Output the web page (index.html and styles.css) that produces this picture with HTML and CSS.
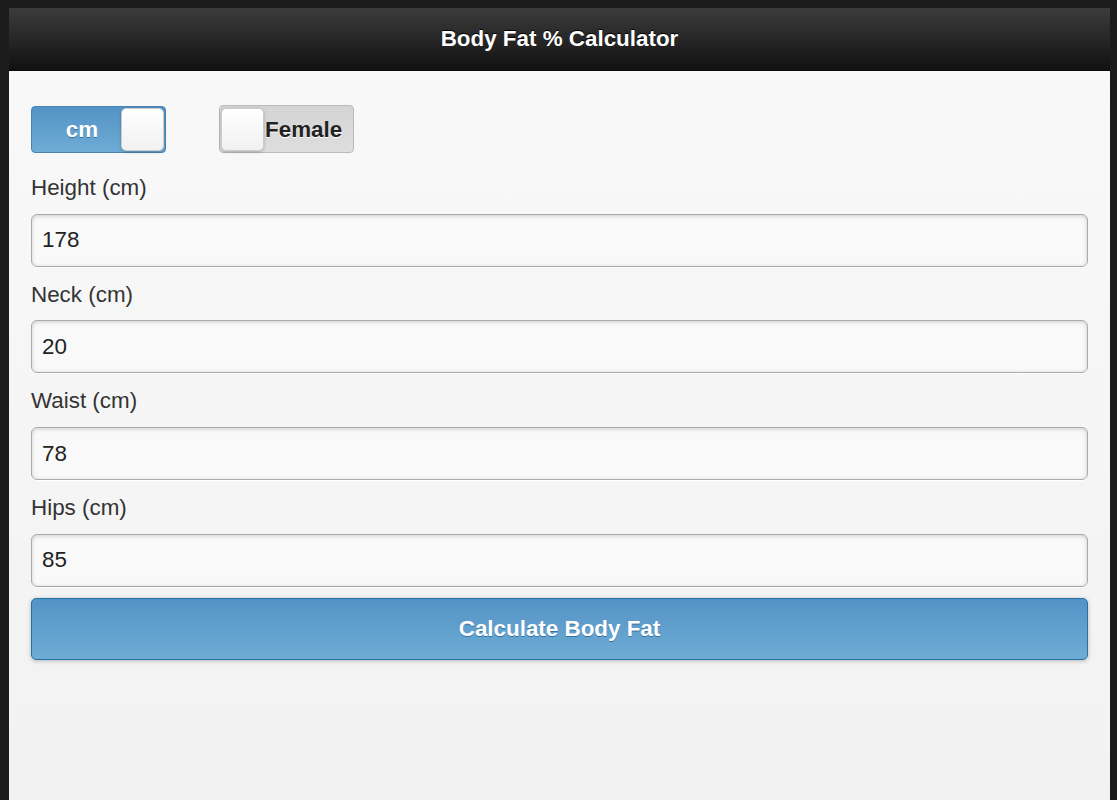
FILE: index.html
```html
<!DOCTYPE html>
<html lang="en">
<head>
<meta charset="utf-8">
<title>Body Fat % Calculator</title>
<link rel="stylesheet" href="styles.css">
</head>
<body>
<div class="frame">
  <div class="page">
    <header class="header"><h1 class="title">Body Fat % Calculator</h1></header>
    <main class="content">
      <div class="toggles">
        <div class="flip flip-on">
          <span class="flip-label">cm</span>
          <span class="flip-handle"></span>
        </div>
        <div class="flip flip-off">
          <span class="flip-handle"></span>
          <span class="flip-label">Female</span>
        </div>
      </div>
      <div class="field">
        <label class="label">Height (cm)</label>
        <div class="input">178</div>
      </div>
      <div class="field">
        <label class="label">Neck (cm)</label>
        <div class="input">20</div>
      </div>
      <div class="field">
        <label class="label">Waist (cm)</label>
        <div class="input">78</div>
      </div>
      <div class="field">
        <label class="label">Hips (cm)</label>
        <div class="input">85</div>
      </div>
      <div class="btn">Calculate Body Fat</div>
    </main>
  </div>
</div>
</body>
</html>
```
FILE: styles.css
```css
html, body {
  margin: 0;
  padding: 0;
  height: 100%;
}
body {
  background: #1c1c1c;
  font-family: "Liberation Sans", Arial, sans-serif;
  overflow: hidden;
}
.frame {
  padding: 8px 7px 0 9px;
  height: 100%;
  box-sizing: border-box;
}
.page {
  height: 100%;
  background: linear-gradient(#f9f9f9, #f2f2f2);
  display: flex;
  flex-direction: column;
}
.header {
  height: 63px;
  background: linear-gradient(#3c3c3c, #111111);
  border-bottom: 1px solid #0b0b0b;
  box-sizing: border-box;
  display: flex;
  align-items: center;
  justify-content: center;
}
.title {
  margin: 0;
  color: #fff;
  font-size: 22.4px;
  font-weight: bold;
  text-shadow: 0 -1px 0 #000;
}
.content {
  padding: 35px 22px 0 22px;
  display: flex;
  flex-direction: column;
}
.toggles {
  display: flex;
  align-items: flex-start;
  gap: 53px;
  margin-bottom: 19px;
}
.flip {
  width: 135px;
  height: 47px;
  box-sizing: border-box;
  border-radius: 4px;
  display: flex;
  align-items: center;
  padding: 0 1px;
  font-size: 22.4px;
  font-weight: bold;
}
.flip-on {
  background: linear-gradient(#5393c5, #6facd5);
  border: 1px solid #4a84b4;
  color: #fff;
  text-shadow: 0 1px 0 #3373a5;
}
.flip-on .flip-label {
  flex: 1;
  text-align: center;
  padding-left: 10px;
}
.flip-off {
  height: 48px;
  background: linear-gradient(#d4d4d4, #dedede);
  border: 1px solid #bbbbbb;
  color: #222;
  text-shadow: 0 1px 0 #fff;
  margin-top: -1px;
}
.flip-off .flip-label {
  margin-left: 1px;
  padding-top: 1px;
}
.flip-handle {
  width: 43px;
  height: 43px;
  box-sizing: border-box;
  border-radius: 5px;
  background: linear-gradient(#ffffff, #f1f1f1);
  border: 1px solid #cccccc;
  box-shadow: 0 1px 3px rgba(0,0,0,0.25);
}
.field {
  display: flex;
  flex-direction: column;
}
.label {
  font-size: 22.4px;
  color: #333;
  line-height: 28px;
  padding-top: 2px;
  margin-bottom: 11.7px;
}
.input {
  height: 53px;
  box-sizing: border-box;
  border: 1px solid #aaaaaa;
  border-radius: 6px;
  background: #f9f9f9;
  box-shadow: inset 0 1px 4px rgba(0,0,0,0.18), 0 1px 0 #fff;
  font-size: 22.4px;
  color: #222;
  padding-left: 10px;
  display: flex;
  align-items: center;
  margin-bottom: 12px;
}
.btn {
  height: 62px;
  box-sizing: border-box;
  border: 1px solid #2373a5;
  border-radius: 5px;
  background: linear-gradient(#5393c5, #6facd5);
  box-shadow: 0 1px 4px rgba(0,0,0,0.25);
  color: #fff;
  font-size: 22.4px;
  font-weight: bold;
  text-shadow: 0 1px 0 #3373a5;
  display: flex;
  align-items: center;
  justify-content: center;
  margin-top: -1px;
}
```
